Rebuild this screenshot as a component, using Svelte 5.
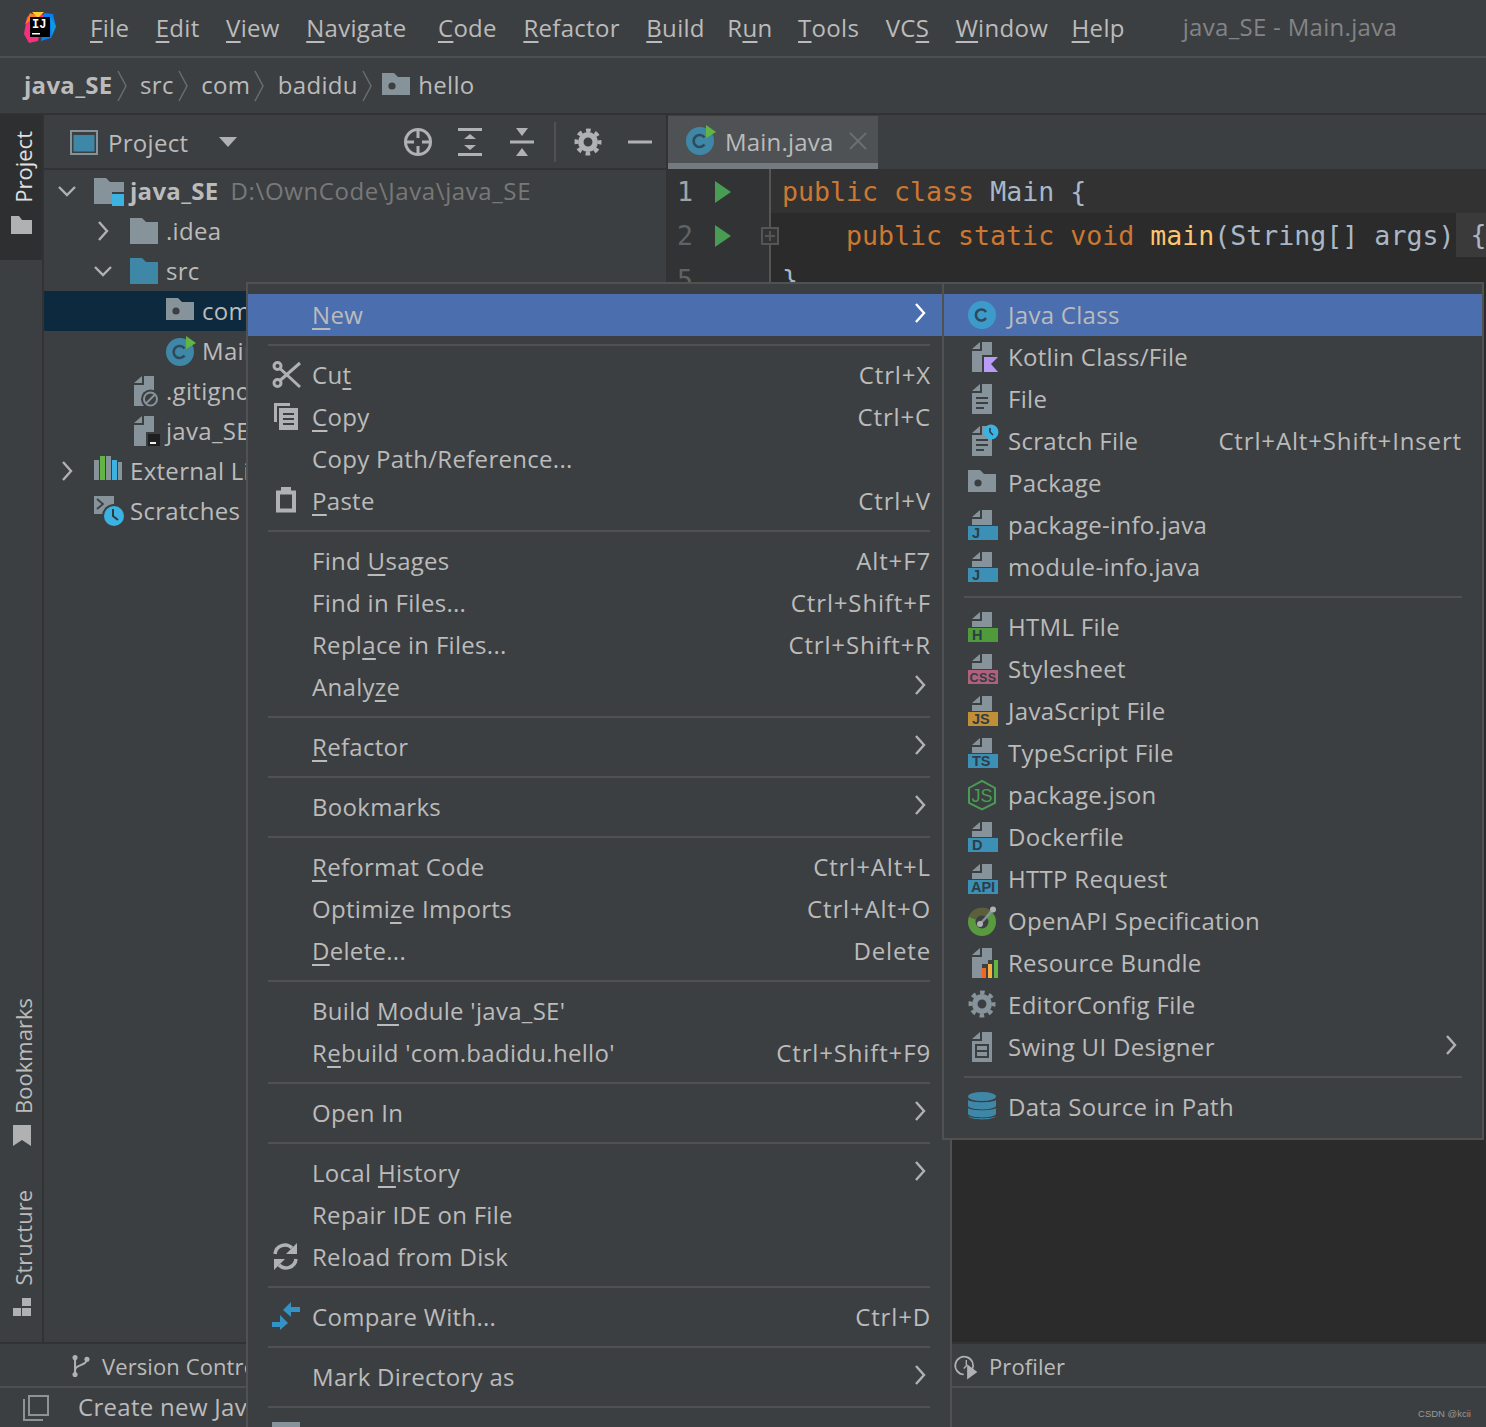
<script>
	const menus = ['&File', '&Edit', '&View', '&Navigate', '&Code', '&Refactor', '&Build', 'R&un', '&Tools', 'VC&S', '&Window', '&Help'];

	const tree = [
		{ depth: 0, open: 'down', icon: 'module', name: 'java_SE', bold: true, path: 'D:\\OwnCode\\Java\\java_SE' },
		{ depth: 1, open: 'right', icon: 'folder', name: '.idea' },
		{ depth: 1, open: 'down', icon: 'src', name: 'src' },
		{ depth: 2, icon: 'package', name: 'com.badidu.hello', selected: true },
		{ depth: 2, icon: 'mainclass', name: 'Main' },
		{ depth: 1, icon: 'gitignore', name: '.gitignore' },
		{ depth: 1, icon: 'iml', name: 'java_SE.iml' },
		{ depth: 0, open: 'right', icon: 'libs', name: 'External Libraries' },
		{ depth: 0, icon: 'scratches', name: 'Scratches and Consoles' }
	];

	const mainMenu = [
		{ t: '&New', arrow: true, sel: true },
		{ sep: true },
		{ t: 'Cu&t', icon: 'cut', key: 'Ctrl+X' },
		{ t: '&Copy', icon: 'copy', key: 'Ctrl+C' },
		{ t: 'Copy Path/Reference...' },
		{ t: '&Paste', icon: 'paste', key: 'Ctrl+V' },
		{ sep: true },
		{ t: 'Find &Usages', key: 'Alt+F7' },
		{ t: 'Find in Files...', key: 'Ctrl+Shift+F' },
		{ t: 'Repl&ace in Files...', key: 'Ctrl+Shift+R' },
		{ t: 'Analy&ze', arrow: true },
		{ sep: true },
		{ t: '&Refactor', arrow: true },
		{ sep: true },
		{ t: 'Bookmarks', arrow: true },
		{ sep: true },
		{ t: '&Reformat Code', key: 'Ctrl+Alt+L' },
		{ t: 'Optimi&ze Imports', key: 'Ctrl+Alt+O' },
		{ t: '&Delete...', key: 'Delete' },
		{ sep: true },
		{ t: "Build &Module 'java_SE'" },
		{ t: "R&ebuild 'com.badidu.hello'", key: 'Ctrl+Shift+F9' },
		{ sep: true },
		{ t: 'Open In', arrow: true },
		{ sep: true },
		{ t: 'Local &History', arrow: true },
		{ t: 'Repair IDE on File' },
		{ t: 'Reload from Disk', icon: 'reload' },
		{ sep: true },
		{ t: 'Compare With...', icon: 'compare', key: 'Ctrl+D' },
		{ sep: true },
		{ t: 'Mark Directory as', arrow: true },
		{ sep: true },
		{ t: '', icon: 'clipped' }
	];

	const blue = '#3c8fb5';
	const newMenu = [
		{ t: 'Java Class', icon: 'jclass', sel: true },
		{ t: 'Kotlin Class/File', icon: 'kotlin' },
		{ t: 'File', icon: 'file' },
		{ t: 'Scratch File', icon: 'scratch', key: 'Ctrl+Alt+Shift+Insert' },
		{ t: 'Package', icon: 'package' },
		{ t: 'package-info.java', tag: 'J', color: blue },
		{ t: 'module-info.java', tag: 'J', color: blue },
		{ sep: true },
		{ t: 'HTML File', tag: 'H', color: '#4f9a3a' },
		{ t: 'Stylesheet', tag: 'CSS', color: '#b0607a' },
		{ t: 'JavaScript File', tag: 'JS', color: '#c08f36' },
		{ t: 'TypeScript File', tag: 'TS', color: blue },
		{ t: 'package.json', icon: 'node' },
		{ t: 'Dockerfile', tag: 'D', color: blue },
		{ t: 'HTTP Request', tag: 'API', color: blue },
		{ t: 'OpenAPI Specification', icon: 'openapi' },
		{ t: 'Resource Bundle', icon: 'bundle' },
		{ t: 'EditorConfig File', icon: 'gear' },
		{ t: 'Swing UI Designer', icon: 'swing', arrow: true },
		{ sep: true },
		{ t: 'Data Source in Path', icon: 'database' }
	];

	const parts = (s) => {
		const i = s.indexOf('&');
		if (i < 0) return [s, '', ''];
		return [s.slice(0, i), s[i + 1], s.slice(i + 2)];
	};
</script>

{#snippet mnemonic(s)}
	{@const p = parts(s)}
	{p[0]}<u>{p[1]}</u>{p[2]}
{/snippet}

{#snippet chevron(dir, color = '#afb1b3')}
	<svg class="chev" viewBox="0 0 20 20">
		{#if dir === 'down'}
			<path d="M2 6l8 8 8-8" fill="none" stroke={color} stroke-width="2.4" />
		{:else}
			<path d="M6 1l8 9-8 9" fill="none" stroke={color} stroke-width="2.4" />
		{/if}
	</svg>
{/snippet}

{#snippet crumbSep()}
	<svg class="crumb-sep" viewBox="0 0 10 32"><path d="M1 1l8 15-8 15" fill="none" stroke="#6a6d6f" stroke-width="1.5" /></svg>
{/snippet}

{#snippet gearShape(color)}
	<circle cx="15" cy="15" r="11.5" fill="none" stroke={color} stroke-width="4" stroke-dasharray="4.6 4.43" stroke-dashoffset="2.3" />
	<circle cx="15" cy="15" r="7.2" fill="none" stroke={color} stroke-width="5.5" />
{/snippet}

{#snippet icon(name, tag, color)}
	<svg class="ic" viewBox="0 0 30 30">
		{#if tag}
			<path d="M12 0v7H4zM14 0h10v15H4V9h10z" fill="#87939a" />
			<rect x="0" y="16" width="30" height="14" fill={color} />
			<text x={tag === 'CSS' || tag === 'API' ? 15 : 4} y="28" text-anchor={tag === 'CSS' || tag === 'API' ? 'middle' : 'start'} class="tag" class:wide={tag === 'CSS'}>{tag}</text>
		{:else if name === 'jclass'}
			<circle cx="14" cy="15" r="14" fill="#3d9bcb" />
			<path d="M18 12a5.500 5.500 0 1 0 0 6" fill="none" stroke="#2f4a5a" stroke-width="2.6" />
		{:else if name === 'mainclass'}
			<circle cx="14" cy="16" r="14" fill="#3f87a6" />
			<path d="M18.5 12.5a6 6 0 1 0 0 7" fill="none" stroke="#2f4a5a" stroke-width="2.6" />
			<path d="M20 0l10 7-10 6z" fill="#62b543" />
		{:else if name === 'kotlin'}
			<path d="M12 0v7H4zM14 0h10v13H14v17H4V9h10z" fill="#87939a" />
			<path d="M16 15h14l-7 7 7 8H16z" fill="#b99bf8" />
		{:else if name === 'file'}
			<path d="M12 0v7H4zM14 0h10v30H4V9h10z" fill="#87939a" />
			<path d="M8 14h12M8 19h12M8 24h8" stroke="#3c3f41" stroke-width="2" />
		{:else if name === 'scratch'}
			<path d="M12 0v7H4zM14 0h10v30H4V9h10z" fill="#87939a" />
			<path d="M8 14h12M8 19h12M8 24h8" stroke="#3c3f41" stroke-width="2" />
			<circle cx="23" cy="6" r="7.5" fill="#3cb2e2" />
			<path d="M22 2v4l3 3" fill="none" stroke="#2f3a40" stroke-width="1.6" />
		{:else if name === 'package'}
			<path d="M0 2h12l4 4h12v18H0z" fill="#87939a" />
			<circle cx="10" cy="15" r="3.6" fill="#3c3f41" />
		{:else if name === 'folder'}
			<path d="M0 2h12l4 4h12v22H0z" fill="#87939a" />
		{:else if name === 'src'}
			<path d="M0 2h12l4 4h12v22H0z" fill="#3f87a6" />
		{:else if name === 'module'}
			<path d="M0 2h12l4 4h14v10H18v12H0z" fill="#87939a" />
			<rect x="18" y="18" width="12" height="12" fill="#3cb2e2" />
		{:else if name === 'gitignore'}
			<path d="M12 0v7H4zM14 0h10v30H4V9h10z" fill="#87939a" />
			<circle cx="20.5" cy="23" r="9.5" fill="#3c3f41" />
			<circle cx="20.5" cy="23" r="6.5" fill="none" stroke="#87939a" stroke-width="2" />
			<path d="M16 27.5l9-9" stroke="#87939a" stroke-width="2" />
		{:else if name === 'iml'}
			<path d="M12 0v7H4zM14 0h10v30H4V9h10z" fill="#87939a" />
			<rect x="16" y="16" width="16" height="16" fill="#3c3f41" />
			<rect x="18" y="18" width="12" height="12" fill="#1f1f1f" />
			<rect x="20" y="26" width="6" height="2" fill="#eee" />
		{:else if name === 'libs'}
			<rect x="0" y="4" width="5" height="20" fill="#87939a" />
			<rect x="6" y="0" width="5" height="24" fill="#62b543" />
			<rect x="12" y="0" width="5" height="24" fill="#87939a" />
			<rect x="18" y="4" width="5" height="20" fill="#3cb2e2" />
			<rect x="24" y="6" width="4" height="18" fill="#87939a" />
		{:else if name === 'scratches'}
			<rect x="0" y="0" width="20" height="18" fill="#87939a" />
			<path d="M3 3l6 5-6 5" fill="none" stroke="#3c3f41" stroke-width="1.8" />
			<circle cx="20" cy="20" r="12" fill="#3c3f41" />
			<circle cx="20" cy="20" r="10" fill="#3cb2e2" />
			<path d="M19 13v7l5 4" fill="none" stroke="#2f3a40" stroke-width="2" />
		{:else if name === 'node'}
			<path d="M14 0.8L27 8v15l-13 6.5L1 23V8z" fill="none" stroke="#499c54" stroke-width="2" />
			<text x="14" y="21.500" text-anchor="middle" class="node-js">JS</text>
		{:else if name === 'openapi'}
			<circle cx="14" cy="16" r="14" fill="#5a9a3e" />
			<path d="M14 16L1 11A14 14 0 0 1 22 4z" fill="#5b5f3c" />
			<circle cx="14" cy="16" r="6.5" fill="#3c3f41" />
			<path d="M12 18L25 4" stroke="#87939a" stroke-width="2.4" />
			<circle cx="12" cy="18" r="3" fill="#afb1b3" />
			<circle cx="25" cy="3.5" r="3" fill="#afb1b3" />
		{:else if name === 'bundle'}
			<path d="M12 0v7H4zM14 0h10v12h-4v4h-6v14H4V9h10z" fill="#87939a" />
			<rect x="14" y="20" width="4" height="10" fill="#f26522" />
			<rect x="20" y="16" width="4" height="14" fill="#f4af3d" />
			<rect x="26" y="12" width="4" height="18" fill="#62b543" />
		{:else if name === 'gear'}
			<g transform="translate(-1 -1)">{@render gearShape('#87939a')}</g>
		{:else if name === 'swing'}
			<path d="M12 0v7H4zM14 0h10v30H4V9h10z" fill="#87939a" />
			<path d="M8 13h12v12H8zM8 19h12" fill="none" stroke="#3c3f41" stroke-width="2" />
		{:else if name === 'database'}
			<g fill="#3f87a6">
				<ellipse cx="14" cy="4.5" rx="14" ry="4.5" />
				<path d="M0 8c3 3 25 3 28 0v6c-2 4.500-26 4.500-28 0z" />
				<path d="M0 16c3 3 25 3 28 0v6c-2 4.500-26 4.500-28 0z" />
				<path d="M0 24c3 3 25 3 28 0c-2 4.500-26 4.500-28 0z" />
			</g>
		{:else if name === 'cut'}
			<g fill="none" stroke="#afb1b3" stroke-width="3">
				<circle cx="5.500" cy="6" r="3.500" />
				<circle cx="5.500" cy="23" r="3.500" />
				<path d="M8 8.500L28 27M8 20.500L28 3" />
			</g>
		{:else if name === 'copy'}
			<path d="M2 1h16v3H5v16H2z" fill="#afb1b3" />
			<rect x="7" y="6" width="19" height="22" fill="#afb1b3" />
			<path d="M11 12h11M11 17h11M11 22h11" stroke="#3c3f41" stroke-width="2" />
		{:else if name === 'paste'}
			<rect x="6" y="6.500" width="16" height="18" fill="none" stroke="#afb1b3" stroke-width="4" />
			<rect x="9" y="1" width="10" height="6" fill="#afb1b3" />
		{:else if name === 'reload'}
			<g fill="none" stroke="#afb1b3" stroke-width="3.500">
				<path d="M3 12a10 10 0 0 1 17-6" />
				<path d="M24 17a10 10 0 0 1-17 6" />
			</g>
			<path d="M25 1v11H14z" fill="#afb1b3" />
			<path d="M2 28V17h11z" fill="#afb1b3" />
		{:else if name === 'compare'}
			<path d="M11 8l8-8v5h9v5h-9v5zM0 20h8v-7l8 8-8 7v-3H0z" fill="#3592c4" />
		{:else if name === 'clipped'}
			<rect x="0" y="0" width="28" height="30" fill="#87939a" />
		{:else if name === 'projectview'}
			<rect x="1" y="1" width="26" height="23" fill="none" stroke="#87939a" stroke-width="2" />
			<rect x="3.500" y="5" width="21" height="16.500" fill="#3f87a6" />
		{:else if name === 'locate'}
			<circle cx="15" cy="15" r="12.500" fill="none" stroke="#afb1b3" stroke-width="3" />
			<path d="M15 3v8M15 19v8M3 15h8M19 15h8" stroke="#afb1b3" stroke-width="3" />
		{:else if name === 'expand'}
			<path d="M3 1h24v3H3zM3 26h24v3H3zM15 7l6 5H9zM15 23l-6-5h12z" fill="#afb1b3" />
		{:else if name === 'collapse'}
			<path d="M3 13.500h24v3H3zM9 1h12l-6 8zM9 29h12l-6-8z" fill="#afb1b3" />
		{:else if name === 'settings'}
			{@render gearShape('#afb1b3')}
		{:else if name === 'minimize'}
			<rect x="3" y="13.500" width="24" height="3" fill="#afb1b3" />
		{:else if name === 'closetab'}
			<path d="M7 7l16 16M23 7L7 23" stroke="#6b6f72" stroke-width="1.800" />
		{:else if name === 'vcs'}
			<circle cx="8" cy="5" r="3" fill="#afb1b3" />
			<circle cx="8" cy="25" r="3" fill="#afb1b3" />
			<circle cx="22" cy="7" r="3" fill="#afb1b3" />
			<path d="M8 5v20M22 7c0 8-14 6-14 13" fill="none" stroke="#afb1b3" stroke-width="2.400" />
		{:else if name === 'profiler'}
			<path d="M20 19a10.500 10.500 0 1 0-10 6" fill="none" stroke="#afb1b3" stroke-width="2" />
			<path d="M13 8v7l-3 3" fill="none" stroke="#afb1b3" stroke-width="1.600" />
			<path d="M14 13l12 9-12 9z" fill="#afb1b3" />
		{:else if name === 'windows'}
			<path d="M2 6v21h19" fill="none" stroke="#8f9294" stroke-width="2" />
			<rect x="7" y="3" width="19" height="19" fill="none" stroke="#8f9294" stroke-width="2" />
		{:else if name === 'sidefolder'}
			<path d="M4 5h8l3 4h10v14H4z" fill="#afb1b3" />
		{:else if name === 'bookmark'}
			<path d="M6 4h18v21l-9-6-9 6z" fill="#afb1b3" />
		{:else if name === 'structure'}
			<path d="M15 4h9v8h-9zM6 14h8v8H6zM15 14h9v8h-9z" fill="#afb1b3" />
		{/if}
	</svg>
{/snippet}

{#snippet menuList(rows)}
	{#each rows as row}
		{#if row.sep}
			<div class="sep"></div>
		{:else}
			<div class="item" class:sel={row.sel}>
				{#if row.icon || row.tag}
					{@render icon(row.icon, row.tag, row.color)}
				{:else}
					<span class="ic"></span>
				{/if}
				<span class="label">{@render mnemonic(row.t)}</span>
				{#if row.key}<span class="key">{row.key}</span>{/if}
				{#if row.arrow}
					<span class="more">{@render chevron('right', row.sel ? '#ffffff' : '#afb1b3')}</span>
				{/if}
			</div>
		{/if}
	{/each}
{/snippet}

<div class="app">
	<header class="titlebar">
		<svg class="logo" viewBox="0 0 32 32">
			<path d="M3 5L12 0l8 3-6 26-9 2-5-9z" fill="#f5317f" />
			<path d="M1 12L6 1l8 3z" fill="#fc801d" />
			<path d="M8 0h12l-6 6z" fill="#fdcb2d" />
			<path d="M20 1l9 1 3 13-5 11-10 3z" fill="#087cfa" />
			<path d="M26 4l6 10-4 10z" fill="#21d789" opacity="0.35" />
			<rect x="6" y="5" width="20" height="20" fill="#000" />
			<text x="8" y="15.500" class="logo-text">IJ</text>
			<rect x="8" y="21" width="8" height="1.500" fill="#fff" />
		</svg>
		<nav class="menus">
			{#each menus as m}
				<span>{@render mnemonic(m)}</span>
			{/each}
		</nav>
		<span class="wintitle">java_SE - Main.java</span>
	</header>

	<div class="crumbs">
		<b>java_SE</b>{@render crumbSep()}
		<span>src</span>{@render crumbSep()}
		<span>com</span>{@render crumbSep()}
		<span>badidu</span>{@render crumbSep()}
		<span class="crumb-folder">{@render icon('package')}</span>
		<span>hello</span>
	</div>

	<div class="main">
		<aside class="stripe">
			<div class="side-tab active">
				<span class="vtext">Project</span>
				{@render icon('sidefolder')}
			</div>
			<div class="side-tab bookmarks">
				<span class="vtext">Bookmarks</span>
				{@render icon('bookmark')}
			</div>
			<div class="side-tab">
				<span class="vtext">Structure</span>
				{@render icon('structure')}
			</div>
		</aside>

		<section class="project">
			<div class="project-head">
				<span class="view-icon">{@render icon('projectview')}</span>
				<span class="project-title">Project</span>
				<span class="caret"></span>
				<div class="tools">
					{@render icon('locate')}
					{@render icon('expand')}
					{@render icon('collapse')}
					<span class="tool-sep"></span>
					{@render icon('settings')}
					{@render icon('minimize')}
				</div>
			</div>
			<div class="tree">
				{#each tree as node}
					<div class="node" class:selected={node.selected} style="padding-left: {13 + node.depth * 36}px">
						<span class="twist">
							{#if node.open}{@render chevron(node.open)}{/if}
						</span>
						{@render icon(node.icon)}
						<span class="node-name" class:bold={node.bold}>{node.name}</span>
						{#if node.path}<span class="node-path">{node.path}</span>{/if}
					</div>
				{/each}
			</div>
		</section>

		<section class="editor">
			<div class="tabs">
				<div class="tab">
					{@render icon('mainclass')}
					<span class="tab-name">Main.java</span>
					<span class="tab-close">{@render icon('closetab')}</span>
				</div>
			</div>
			<div class="code-area">
				<div class="gutter">
					<div class="gline current">
						<span class="num">1</span><span class="run"></span>
					</div>
					<div class="gline">
						<span class="num">2</span><span class="run"></span>
						<span class="fold"></span>
					</div>
					<div class="gline"><span class="num">5</span></div>
				</div>
				<div class="code">
					<div class="cline current"><span class="kw">public class</span> Main &#123;</div>
					<div class="cline"><span class="indent"></span><span class="kw">public static void</span> <span class="fn">main</span>(String[] args) <span class="fold-brace">&#123;</span></div>
					<div class="cline">&#125;</div>
				</div>
			</div>
		</section>
	</div>

	<div class="toolbar">
		<div class="tw-vcs">
			<span class="tw-icon">{@render icon('vcs')}</span>
			<span>Version Control</span>
		</div>
		<div class="tw-profiler">
			<span class="tw-icon">{@render icon('profiler')}</span>
			<span>Profiler</span>
		</div>
	</div>

	<footer class="status">
		{@render icon('windows')}
		<span class="status-text">Create new Java class</span>
		<span class="watermark">CSDN @kcii</span>
	</footer>

	<div class="menu context">{@render menuList(mainMenu)}</div>
	<div class="menu submenu">{@render menuList(newMenu)}</div>
</div>

<style>
	:global(body) {
		margin: 0;
		background: #3c3f41;
	}

	.app {
		position: relative;
		width: 1486px;
		height: 1427px;
		overflow: hidden;
		display: flex;
		flex-direction: column;
		background: #3c3f41;
		color: #bbbbbb;
		font-family: 'Open Sans', 'Noto Sans', sans-serif;
		font-size: 24px;
		letter-spacing: 0.3px;
	}

	u {
		text-underline-offset: 4px;
		text-decoration-thickness: 2px;
	}

	svg {
		display: block;
		flex: none;
	}

	.ic {
		display: block;
		width: 30px;
		height: 30px;
		flex: none;
		overflow: visible;
	}

	.chev {
		width: 20px;
		height: 20px;
	}

	.tag {
		font: 700 14.500px 'Liberation Sans', sans-serif;
		letter-spacing: 0;
		fill: #2d3e47;
	}

	.tag.wide {
		font-size: 12.500px;
		letter-spacing: 0.5px;
	}

	.node-js {
		font: 400 18px 'Liberation Sans', sans-serif;
		letter-spacing: 0;
		fill: #499c54;
	}

	.logo-text {
		font: 700 12px 'Liberation Mono', monospace;
		letter-spacing: 0;
		fill: #fff;
	}

	/* title bar */
	.titlebar {
		height: 56px;
		flex: none;
		display: flex;
		align-items: center;
		padding-left: 24px;
		border-bottom: 2px solid #4d4f51;
	}

	.logo {
		width: 32px;
		height: 32px;
		margin-right: 34px;
	}

	.menus {
		display: flex;
		gap: 26.500px;
		margin-top: -2px;
	}

	.menus span:nth-child(4) {
		margin-right: 5px;
	}

	.menus span:nth-child(7) {
		margin-right: -4px;
	}

	.menus span:nth-child(8) {
		margin-right: -1px;
	}

	.menus span:nth-child(11) {
		margin-right: -3px;
	}

	.wintitle {
		margin-left: 58px;
		margin-top: -3px;
		color: #828486;
	}

	/* breadcrumbs */
	.crumbs {
		height: 55px;
		flex: none;
		display: flex;
		align-items: center;
		padding-left: 24px;
		border-bottom: 2px solid #323232;
	}

	.crumbs > span:not(.crumb-folder),
	.crumbs b {
		margin-top: -2px;
	}

	.crumb-sep {
		width: 10px;
		height: 32px;
		margin: 0 13.500px 0 4px;
	}

	.crumb-folder {
		margin: 0 6px 0 -3px;
	}

	.crumbs b {
		font-weight: 700;
	}

	/* main area */
	.main {
		flex: 1;
		min-height: 0;
		display: flex;
		border-bottom: 2px solid #323232;
	}

	.stripe {
		width: 42px;
		flex: none;
		display: flex;
		flex-direction: column;
		border-right: 2px solid #323232;
	}

	.side-tab {
		display: flex;
		flex-direction: column;
		align-items: center;
		gap: 8px;
		padding: 14px 0 18px 4px;
	}

	.side-tab .ic {
		margin-left: -2px;
	}

	.side-tab.active {
		height: 145px;
		box-sizing: border-box;
		background: #2d2f30;
		color: #e0e0e0;
		padding-top: 16px;
		padding-bottom: 0;
	}

	.side-tab.bookmarks {
		margin-top: auto;
		margin-bottom: 11px;
		padding-bottom: 14px;
	}

	.vtext {
		writing-mode: vertical-rl;
		transform: rotate(180deg);
		line-height: 24px;
		font-size: 22px;
		letter-spacing: 0;
	}

	.project {
		width: 622px;
		flex: none;
		border-right: 2px solid #323232;
		overflow: hidden;
	}

	.project-head {
		height: 52px;
		margin-top: 1px;
		display: flex;
		align-items: center;
		padding-left: 26px;
		padding-right: 11px;
		border-bottom: 2px solid #323232;
	}

	.view-icon {
		margin-top: 5px;
	}

	.project-title {
		margin-left: 8px;
	}

	.caret {
		margin-left: 31px;
		border-top: 10px solid #afb1b3;
		border-left: 9px solid transparent;
		border-right: 9px solid transparent;
	}

	.tools {
		margin-left: auto;
		display: flex;
		align-items: center;
		gap: 22px;
	}

	.tool-sep {
		width: 2px;
		height: 40px;
		margin: 0 -5px;
		background: #515151;
	}

	.tree {
		padding-top: 1px;
	}

	.node {
		height: 40px;
		display: flex;
		align-items: center;
		white-space: nowrap;
		overflow: hidden;
	}

	.node.selected {
		background: #0d293e;
	}

	.twist {
		width: 37px;
		flex: none;
		display: flex;
	}

	.node-name {
		margin-left: 6px;
		margin-top: -2px;
	}

	.node-name.bold {
		font-weight: 700;
	}

	.node-path {
		margin-left: 12px;
		margin-top: -2px;
		color: #787878;
		letter-spacing: 0.6px;
	}

	/* editor */
	.editor {
		flex: 1;
		min-width: 0;
		display: flex;
		flex-direction: column;
	}

	.tabs {
		height: 53px;
		flex: none;
		margin-top: 1px;
		display: flex;
	}

	.tab {
		width: 210px;
		box-sizing: border-box;
		display: flex;
		align-items: center;
		gap: 9px;
		padding: 0 9px 0 18px;
		background: #4e5254;
		border-bottom: 6px solid #747a80;
	}

	.tab-name {
		margin-top: 4px;
		letter-spacing: 0.2px;
	}

	.tab-close {
		margin-left: auto;
		margin-top: 3px;
	}

	.code-area {
		flex: 1;
		min-height: 0;
		display: flex;
		position: relative;
		background: #2b2b2b;
		font-family: 'DejaVu Sans Mono', 'Liberation Mono', monospace;
		font-size: 26.600px;
		letter-spacing: 0;
		color: #a9b7c6;
		overflow: hidden;
	}

	.gutter {
		width: 101px;
		flex: none;
		background: #313335;
		border-right: 2px solid #555555;
		color: #606366;
	}

	.gline {
		position: relative;
		height: 44px;
		display: flex;
		align-items: center;
		padding-left: 10px;
	}

	.gline.current {
		color: #a4a3a3;
	}

	.num {
		width: 37px;
		line-height: 47px;
		margin-left: -1px;
	}

	.run {
		border-left: 16px solid #499c54;
		border-top: 11px solid transparent;
		border-bottom: 11px solid transparent;
		margin-left: 1px;
		margin-top: 1px;
	}

	.fold {
		position: absolute;
		right: -10px;
		top: 14px;
		width: 14px;
		height: 14px;
		border: 2px solid #555555;
		background:
			linear-gradient(#555555, #555555) center / 10px 2px no-repeat,
			linear-gradient(#555555, #555555) center / 2px 10px no-repeat,
			#313335;
	}

	.code {
		flex: 1;
		min-width: 0;
	}

	.cline {
		height: 44px;
		line-height: 45px;
		padding-left: 11px;
		white-space: pre;
	}

	.cline.current {
		background: #323232;
	}

	.indent {
		display: inline-block;
		width: 64px;
	}

	.kw {
		color: #cc7832;
	}

	.fn {
		color: #ffc66d;
	}

	.fold-brace {
		display: inline-block;
		background: #3a3a3a;
		height: 44px;
		line-height: 44px;
		vertical-align: top;
		padding-left: 14px;
		padding-right: 16px;
		margin-left: -14px;
	}

	/* bottom bars */
	.toolbar {
		height: 42px;
		flex: none;
		display: flex;
		align-items: center;
		border-bottom: 2px solid #4d4f51;
		padding-left: 66px;
		font-size: 22px;
		letter-spacing: 0.1px;
	}

	.toolbar span {
		margin-top: 2px;
	}

	.tw-vcs {
		width: 887px;
		flex: none;
		display: flex;
		align-items: center;
		gap: 6px;
		white-space: nowrap;
	}

	.tw-profiler {
		display: flex;
		align-items: center;
		gap: 6px;
	}

	.tw-icon {
		transform: scale(0.85);
	}

	.status {
		height: 39px;
		flex: none;
		display: flex;
		align-items: center;
		padding-left: 22px;
	}

	.status-text {
		margin-left: 26px;
		margin-top: -2px;
	}

	.watermark {
		margin-left: auto;
		margin-right: 15px;
		margin-top: 11px;
		font: 9.500px 'Liberation Sans', sans-serif;
		letter-spacing: 0;
		color: #9a9a9a;
	}

	/* popup menus */
	.menu {
		position: absolute;
		top: 282px;
		box-sizing: border-box;
		background: #3c3f41;
		border: 2px solid #515151;
		padding: 10px 0;
		white-space: nowrap;
	}

	.context {
		left: 246px;
		width: 706px;
		height: 1200px;
	}

	.submenu {
		left: 942px;
		width: 542px;
		height: 858px;
	}

	.item {
		height: 42px;
		display: flex;
		align-items: center;
		padding: 0 20px 0 24px;
	}

	.context .item {
		padding-right: 19px;
	}

	.item.sel {
		background: #4b6eaf;
	}

	.label {
		margin-left: 10px;
		margin-top: -2px;
		flex: 1;
	}

	.key {
		letter-spacing: 0.85px;
		margin-top: -2px;
	}

	.more {
		margin-right: 1px;
		margin-bottom: 4px;
	}

	.sep {
		height: 2px;
		margin: 8px 20px;
		background: #515151;
	}
</style>
